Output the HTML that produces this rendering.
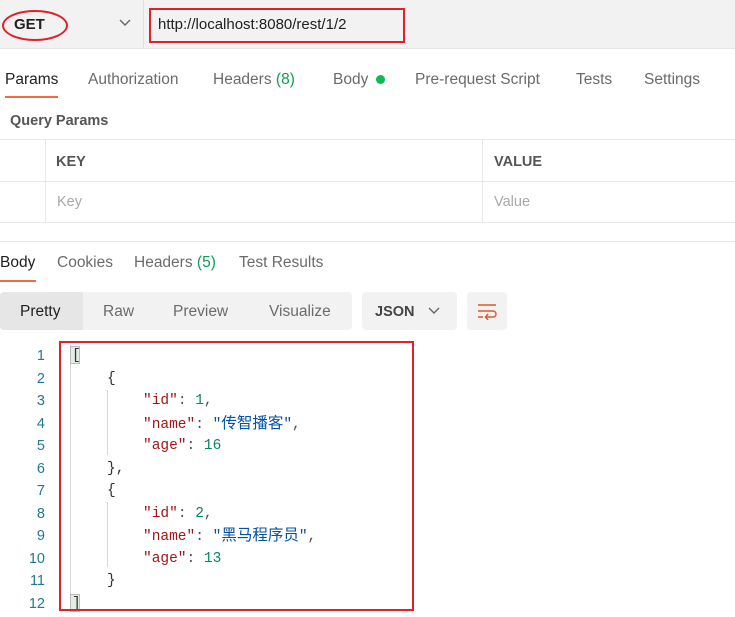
<!DOCTYPE html>
<html><head><meta charset="utf-8"><style>
*{margin:0;padding:0;box-sizing:border-box}
body{width:735px;height:617px;background:#fff;position:relative;overflow:hidden;font-family:"Liberation Sans",sans-serif;font-size:15.5px;color:#505050}
.a{position:absolute;white-space:nowrap;line-height:18px}
.hl{position:absolute;left:0;width:735px;height:1px;background:#e8e8e8}
.vl{position:absolute;width:1px;background:#e8e8e8}
.code{font-family:"Liberation Mono","Noto Sans CJK SC",monospace;font-size:14.5px;line-height:18px}
.code span{line-height:18px}
.cj{font-size:15.5px}
.k{color:#a31515}.s{color:#0451a5}.n{color:#098658}.p{color:#333}
.ln{position:absolute;width:45px;text-align:right;color:#237893;font-family:"Liberation Sans",sans-serif;font-size:14.5px;line-height:18px}
</style></head><body>
<div class="a" style="left:0;top:0;width:735px;height:48px;background:#f2f2f2"></div>
<div class="a" style="left:143px;top:0;width:1px;height:48px;background:#e0e0e0"></div>
<div class="a" style="left:0;top:48px;width:735px;height:1px;background:#e6e6e6"></div>
<div class="a" style="left:14px;top:16px;font-weight:bold;color:#212121;font-size:15px">GET</div>
<div class="a" style="left:2px;top:10px;width:66px;height:31px;border:2px solid #e0202a;border-radius:50%"></div>
<svg class="a" style="left:118px;top:18px" width="14" height="10"><path d="M2 2 L7 7 L12 2" stroke="#666" stroke-width="1.4" fill="none"/></svg>
<div class="a" style="left:158px;top:16px;color:#212121;font-size:15px">http://localhost:8080/rest/1/2</div>
<div class="a" style="left:149px;top:8px;width:256px;height:35px;border:2px solid #e0202a"></div>

<div class="a" style="left:5px;top:71px;color:#212121">Params</div>
<div class="a" style="left:5px;top:96px;width:53px;height:2px;background:#f26b3a"></div>
<div class="a" style="left:88px;top:71px;color:#6b6b6b">Authorization</div>
<div class="a" style="left:213px;top:71px;color:#6b6b6b">Headers <span style="color:#0f9d58">(8)</span></div>
<div class="a" style="left:333px;top:71px;color:#6b6b6b">Body <span style="display:inline-block;width:9px;height:9px;border-radius:50%;background:#0cbb52;margin-left:3px"></span></div>
<div class="a" style="left:415px;top:71px;color:#6b6b6b">Pre-request Script</div>
<div class="a" style="left:576px;top:71px;color:#6b6b6b">Tests</div>
<div class="a" style="left:644px;top:71px;color:#6b6b6b">Settings</div>

<div class="a" style="left:10px;top:112px;font-weight:bold;color:#555;font-size:14.5px">Query Params</div>
<div class="hl" style="top:139px"></div>
<div class="hl" style="top:181px"></div>
<div class="hl" style="top:222px"></div>
<div class="hl" style="top:241px"></div>
<div class="vl" style="left:45px;top:139px;height:83px"></div>
<div class="vl" style="left:482px;top:139px;height:83px"></div>
<div class="a" style="left:56px;top:153px;font-weight:bold;color:#555;font-size:14.5px">KEY</div>
<div class="a" style="left:494px;top:153px;font-weight:bold;color:#555;font-size:14.5px">VALUE</div>
<div class="a" style="left:57px;top:193px;color:#a8a8a8;font-size:14.5px">Key</div>
<div class="a" style="left:494px;top:193px;color:#a8a8a8;font-size:14.5px">Value</div>

<div class="a" style="left:0;top:254px;color:#212121">Body</div>
<div class="a" style="left:0;top:280px;width:36px;height:2px;background:#f26b3a"></div>
<div class="a" style="left:57px;top:254px;color:#6b6b6b">Cookies</div>
<div class="a" style="left:134px;top:254px;color:#6b6b6b">Headers <span style="color:#0f9d58">(5)</span></div>
<div class="a" style="left:239px;top:254px;color:#6b6b6b">Test Results</div>

<div class="a" style="left:0;top:292px;width:352px;height:38px;background:#f2f2f2;border-radius:4px"></div>
<div class="a" style="left:0;top:292px;width:83px;height:38px;background:#e6e6e6;border-radius:4px 0 0 4px"></div>
<div class="a" style="left:20px;top:303px;color:#212121">Pretty</div>
<div class="a" style="left:103px;top:303px;color:#6b6b6b">Raw</div>
<div class="a" style="left:173px;top:303px;color:#6b6b6b">Preview</div>
<div class="a" style="left:269px;top:303px;color:#6b6b6b">Visualize</div>
<div class="a" style="left:362px;top:292px;width:95px;height:38px;background:#f2f2f2;border-radius:4px"></div>
<div class="a" style="left:375px;top:303px;font-weight:bold;color:#444;font-size:14.5px">JSON</div>
<svg class="a" style="left:427px;top:306px" width="14" height="10"><path d="M2 2 L7 7 L12 2" stroke="#666" stroke-width="1.4" fill="none"/></svg>
<div class="a" style="left:467px;top:292px;width:40px;height:38px;background:#f2f2f2;border-radius:4px"></div>
<svg class="a" style="left:476px;top:302px" width="22" height="18"><path d="M2 3H20M2 9H17a3 3 0 0 1 0 6H10M12 12L9.5 15L12 18M2 15H7" stroke="#e0562a" stroke-width="1.4" fill="none"/></svg>

<div class="vl" style="left:70px;top:345px;height:265px;background:#d8d8d8"></div>
<div class="vl" style="left:107px;top:390px;height:65px;background:#d8d8d8"></div>
<div class="vl" style="left:107px;top:502px;height:65px;background:#d8d8d8"></div>
<div class="a" style="left:70px;top:346px;width:10px;height:18px;background:#e4ede4;border:1px solid #bbb"></div>
<div class="a" style="left:70px;top:594px;width:10px;height:18px;background:#e4ede4;border:1px solid #bbb"></div>

<div class="ln" style="top:347px">1</div>
<div class="ln" style="top:369.5px">2</div>
<div class="ln" style="top:392px">3</div>
<div class="ln" style="top:414.5px">4</div>
<div class="ln" style="top:437px">5</div>
<div class="ln" style="top:459.5px">6</div>
<div class="ln" style="top:482px">7</div>
<div class="ln" style="top:504.5px">8</div>
<div class="ln" style="top:527px">9</div>
<div class="ln" style="top:549.5px">10</div>
<div class="ln" style="top:572px">11</div>
<div class="ln" style="top:594.5px">12</div>

<div class="a code p" style="left:72px;top:347px">[</div>
<div class="a code p" style="left:107px;top:369.5px">{</div>
<div class="a code" style="left:143px;top:392px"><span class="k">"id"</span>: <span class="n">1</span>,</div>
<div class="a code" style="left:143px;top:414.5px"><span class="k">"name"</span>: <span class="s">"<span class="cj">传智播客</span>"</span>,</div>
<div class="a code" style="left:143px;top:437px"><span class="k">"age"</span>: <span class="n">16</span></div>
<div class="a code p" style="left:107px;top:459.5px">},</div>
<div class="a code p" style="left:107px;top:482px">{</div>
<div class="a code" style="left:143px;top:504.5px"><span class="k">"id"</span>: <span class="n">2</span>,</div>
<div class="a code" style="left:143px;top:527px"><span class="k">"name"</span>: <span class="s">"<span class="cj">黑马程序员</span>"</span>,</div>
<div class="a code" style="left:143px;top:549.5px"><span class="k">"age"</span>: <span class="n">13</span></div>
<div class="a code p" style="left:107px;top:572px">}</div>
<div class="a code p" style="left:72px;top:594.5px">]</div>

<div class="a" style="left:59px;top:341px;width:355px;height:270px;border:2px solid #e0202a"></div>
</body></html>
